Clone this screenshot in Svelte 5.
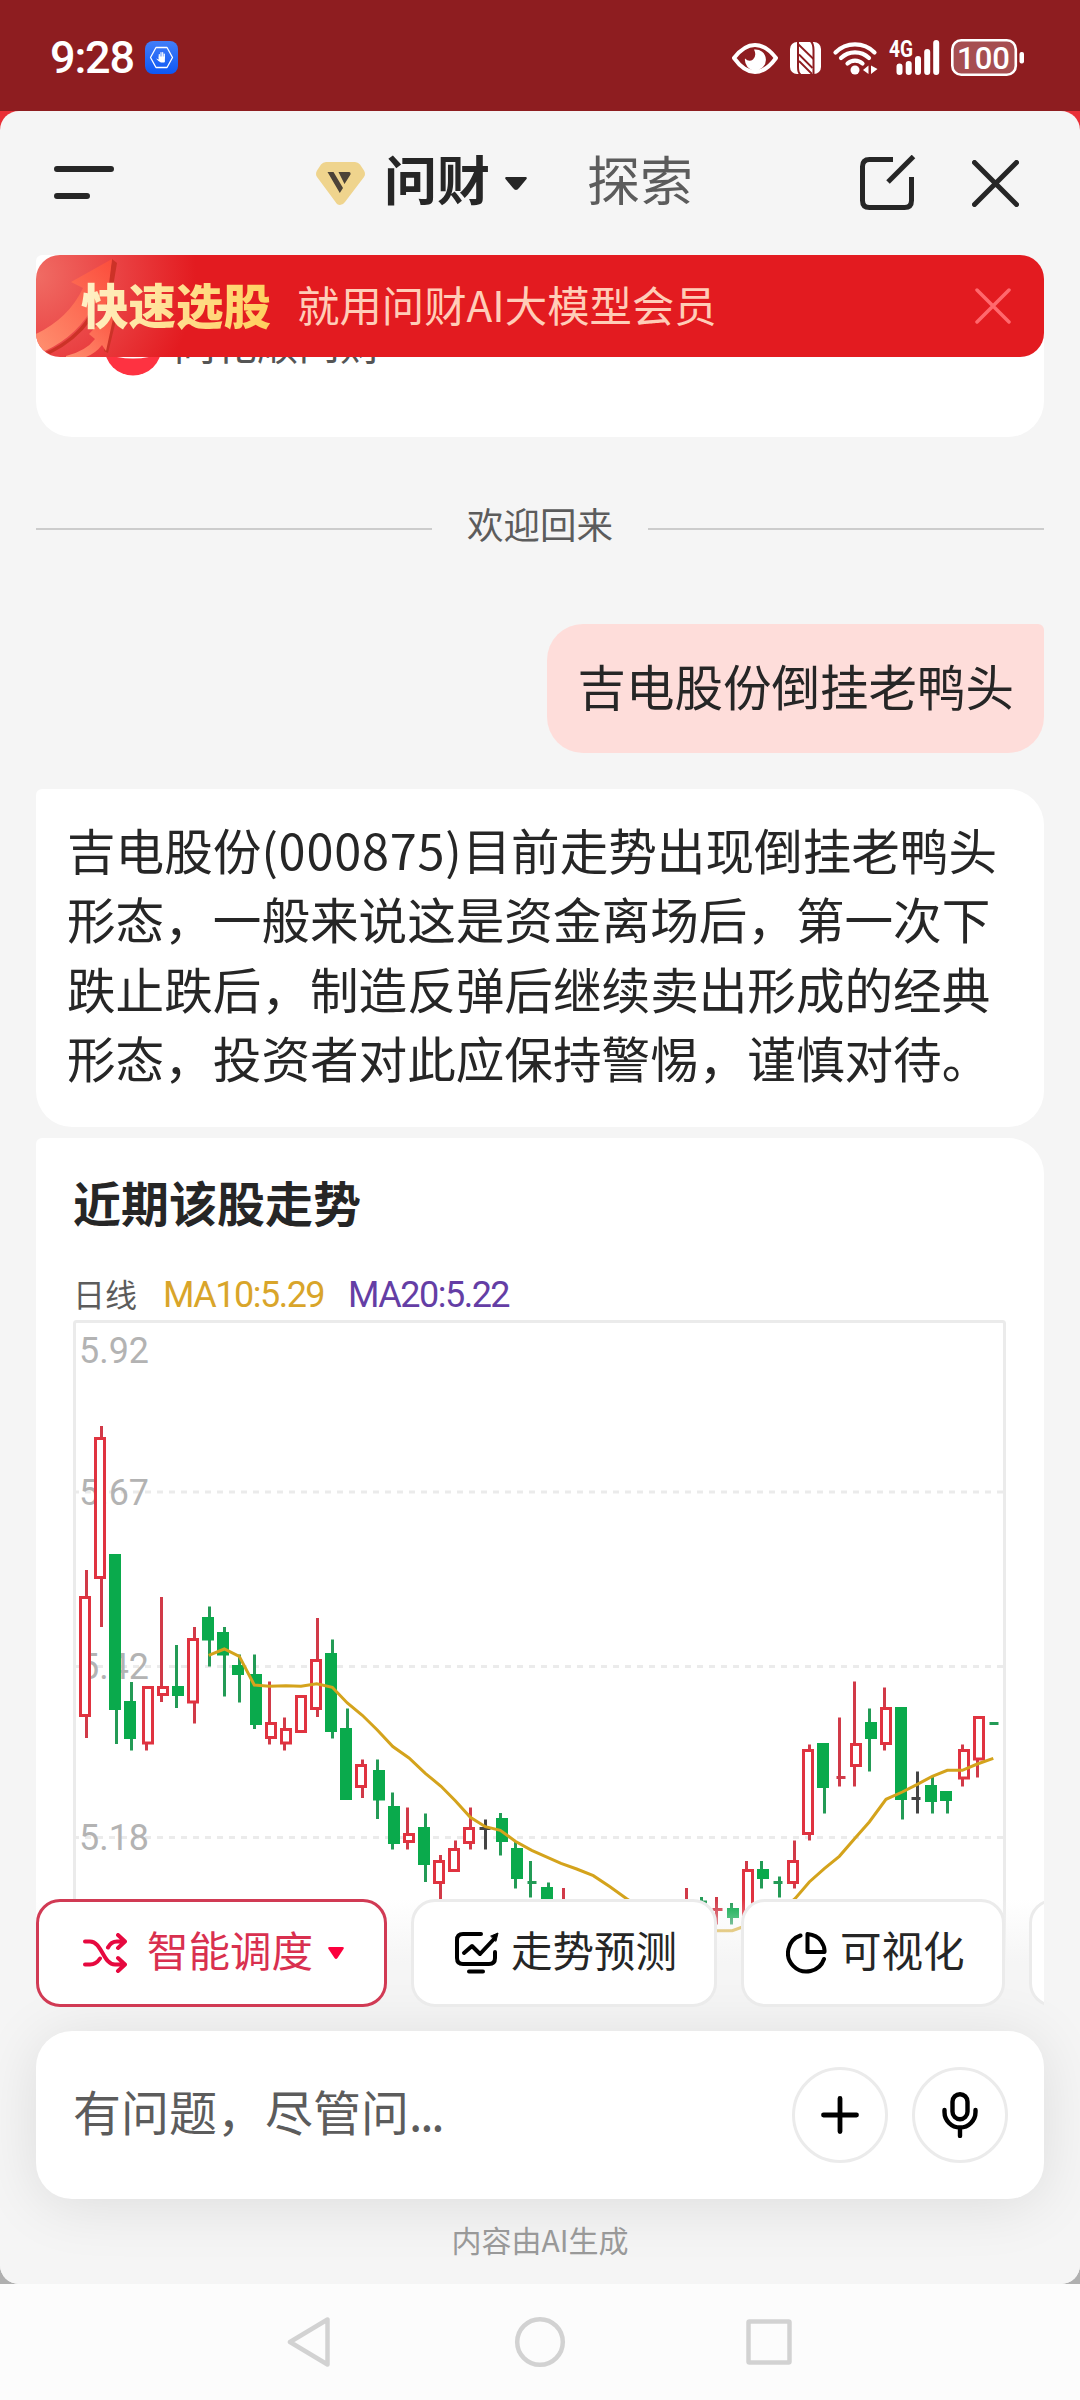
<script>
    const prices = [
        [1363, '5.92'],
        [1505, '5.67'],
        [1679, '5.42'],
        [1850, '5.18']
    ];
    const gridLines = [1492, 1666.5, 1837.5];

    // [body x, wick x, high, body top, body bottom, low, type]
    const candles = [
        [79, 86.5, 1570, 1596, 1717, 1738, 'up'],
        [94, 101.5, 1426, 1437, 1579, 1627, 'up'],
        [109, 116.5, 1554, 1554, 1710, 1744, 'down'],
        [124, 131.5, 1682, 1701, 1739, 1750.5, 'down'],
        [142, 146.5, 1686, 1686, 1744.5, 1750.5, 'up'],
        [157, 161.5, 1597, 1686, 1696, 1702, 'up'],
        [172, 176.5, 1645, 1686, 1696, 1708, 'down'],
        [187, 194.5, 1627, 1638, 1703.5, 1723.5, 'up'],
        [202, 209.5, 1606.5, 1617, 1640.5, 1666.5, 'down'],
        [217, 224.5, 1627, 1632, 1655.5, 1696.5, 'down'],
        [232, 239.5, 1654.5, 1665, 1675, 1702.5, 'down'],
        [250, 254.5, 1654.5, 1674, 1725, 1729, 'down'],
        [265, 269.5, 1681.5, 1722, 1739, 1744.5, 'up'],
        [280, 284.5, 1717.5, 1728, 1744.5, 1750.5, 'up'],
        [295, 302.5, 1695, 1695, 1733, 1733, 'up'],
        [310, 317.5, 1618, 1659, 1710, 1717, 'up'],
        [325, 332.5, 1639.5, 1653, 1732, 1738.5, 'down'],
        [340, 347.5, 1708.5, 1728, 1800, 1800, 'down'],
        [355, 362.5, 1759.5, 1764, 1788, 1798, 'up'],
        [373, 377.5, 1759.5, 1770, 1800.5, 1819, 'down'],
        [388, 392.5, 1792.5, 1806, 1844, 1849.5, 'down'],
        [403, 407.5, 1807.5, 1833, 1843, 1849.5, 'up'],
        [418, 425.5, 1813.5, 1827, 1865, 1882, 'down'],
        [433, 440.5, 1855, 1860, 1884, 1905, 'up'],
        [448, 455.5, 1840.5, 1848, 1872, 1872, 'up'],
        [463, 470.5, 1807.5, 1827, 1844, 1849.5, 'up'],
        [496, 500.5, 1813, 1818, 1842, 1855.5, 'down'],
        [511, 515.5, 1842, 1848, 1879, 1888.5, 'down'],
        [541, 548.5, 1882.5, 1887, 1910, 1915, 'down'],
        [559, 563.5, 1888, 1906, 1920, 1925, 'up'],
        [682, 686.5, 1888, 1906, 1920, 1925, 'up'],
        [727, 731.5, 1903, 1908, 1918, 1924.5, 'down'],
        [742, 746.5, 1861, 1869, 1936, 1936, 'up'],
        [757, 761.5, 1861, 1869, 1879, 1888.5, 'down'],
        [787, 794.5, 1840.5, 1860, 1884, 1888.5, 'up'],
        [802, 809.5, 1744.5, 1749, 1835, 1840.5, 'up'],
        [817, 824.5, 1743, 1743, 1788, 1813.5, 'down'],
        [850, 854.5, 1681.5, 1743, 1767, 1786.5, 'up'],
        [865, 869.5, 1708.5, 1722, 1739, 1771.5, 'down'],
        [880, 884.5, 1687.5, 1707, 1745, 1750.5, 'up'],
        [895, 902.5, 1707, 1707, 1800, 1819.5, 'down'],
        [925, 932.5, 1777, 1785, 1802, 1813.5, 'down'],
        [940, 947.5, 1791, 1791, 1801, 1813.5, 'down'],
        [958, 962.5, 1744.5, 1749, 1779.5, 1786.5, 'up'],
        [973, 977.5, 1716, 1716, 1760.5, 1777.5, 'up']
    ];

    // [wick x, high, low, tick y, tick x1, tick x2, type]
    const dojis = [
        [485.5, 1819.5, 1849.5, 1828.5, 479.5, 490.5, 'flat'],
        [530.5, 1861, 1897.5, 1882.5, 527.5, 536.5, 'down'],
        [701.5, 1897, 1902, 1902, 701, 707, 'down'],
        [716.5, 1897, 1924.5, 1909.5, 712.5, 722.5, 'up'],
        [779.5, 1876.5, 1897.5, 1882.5, 773.5, 782.5, 'down'],
        [839.5, 1717.5, 1786.5, 1777.5, 836.5, 845.5, 'up'],
        [917.5, 1771.5, 1813.5, 1798.5, 911.5, 920.5, 'flat'],
        [994, 1722, 1725, 1723.5, 989.5, 998.5, 'down']
    ];

    const ma10 = [
        [208.7, 1655.3], [224.3, 1649], [239.3, 1656.3], [254.3, 1685], [269.3, 1686.3], [286, 1685.7],
        [301, 1686.3], [316.7, 1683.7], [332.3, 1687.3], [347.3, 1703], [362.3, 1715.3], [377.3, 1730],
        [392.8, 1746.5], [409, 1758], [425.3, 1773.3], [441, 1786.3], [455.3, 1800.7], [470.3, 1817.3],
        [485.3, 1826.7], [500.3, 1830.3], [515.3, 1841.3], [531.7, 1850.3], [561, 1863.3], [576.7, 1869],
        [593.3, 1875.7], [610, 1886.7], [627, 1899], [655, 1916], [690, 1928], [716, 1930.7],
        [732.3, 1930.7], [748, 1925], [772, 1918], [795, 1898.7], [809.3, 1882], [824.3, 1868.7],
        [839.3, 1856.3], [854.3, 1839], [869.3, 1822], [886, 1799.3], [902.3, 1792], [917.3, 1784.3],
        [932.3, 1776.3], [947.3, 1770.3], [962.3, 1770.3], [977.3, 1764], [993.3, 1758.3]
    ];
    const maPoints = ma10.map(p => p.join(',')).join(' ');
</script>

<div class="phone">
    <div class="status">
        <span class="clock">9:28</span>
        <svg class="guard" width="33" height="33" viewBox="0 0 33 33">
            <defs>
                <linearGradient id="guardBg" x1="0" y1="0" x2="0" y2="1">
                    <stop offset="0" stop-color="#437ef8" />
                    <stop offset="1" stop-color="#0c57f5" />
                </linearGradient>
            </defs>
            <rect width="33" height="33" rx="8" fill="url(#guardBg)" />
            <path d="M11 6.5h11l5.5 10-5.5 10H11l-5.5-10z" fill="none" stroke="#fff" stroke-width="1.3" stroke-linejoin="round" />
            <path d="M14.3 17v-3.500M16 16v-4.500M17.700 16v-4.500M19.300 17v-4" stroke="#fff" stroke-width="1.200" stroke-linecap="round" />
            <path d="M11 17.500l2.700 1v-3h6.200v5q0 1-1 1h-3q-2.500-1-4.900-4z" fill="#fff" />
        </svg>
        <svg class="indicators" width="295" height="40" viewBox="731 37 295 40" fill="none" stroke="#fff">
            <path d="M734 57Q744 44 755 44T776 57Q766 71 755 71T734 57z" stroke-width="4" stroke-linejoin="round" />
            <path d="M754 48.500a10.500 10.500 0 1 1-9 9q4 4 8 1q4-4 1-10z" fill="#fff" stroke="none" />
            <rect x="790" y="41" width="31" height="32" rx="7" fill="#fff" stroke="none" />
            <path d="M798 41V66Q798 72 800.500 73.500M813.500 73V49Q813.500 43 811 40.500" stroke="#8e1d20" stroke-width="2" />
            <path d="M798 43L813.500 58M799 53.500L812.500 67M799 60L812 73" stroke="#8e1d20" stroke-width="1.800" />
            <path d="M835.500 51.500a27.500 27.500 0 0 1 39 0M841 57a20 20 0 0 1 28 0M847.500 62.500a11 11 0 0 1 15 0" stroke-width="4.200" stroke-linecap="round" />
            <circle cx="855" cy="69" r="4.500" fill="#fff" stroke="none" />
            <path d="M868.500 64.500V73l-5.500-4zM871 64.500V73l6.500-5z" fill="#fff" stroke="none" />
            <path d="M899.500 65.500V71M908.700 63V71M918 58V71M927.200 51V71M936.200 42V71" stroke-width="6" stroke-linecap="round" />
            <text x="889" y="56" class="net" textLength="24" lengthAdjust="spacingAndGlyphs">4G</text>
            <rect x="952.300" y="39.300" width="63.500" height="34.500" rx="9" fill="#fff" fill-opacity=".22" stroke-width="2.600" />
            <rect x="1019.500" y="51" width="4.500" height="11.500" rx="2" fill="#fff" stroke="none" />
            <text x="983.500" y="68" class="charge" text-anchor="middle">100</text>
        </svg>
    </div>

    <div class="stage">
        <div class="sheet">
            <header>
                <svg class="menu" width="60" height="34" viewBox="0 0 60 34">
                    <path d="M3 3H57M3 30H33" stroke="#262626" stroke-width="6" stroke-linecap="round" />
                </svg>
                <div class="tabs">
                    <svg width="49" height="43" viewBox="0 0 49 43">
                        <path d="M10 0h29q3 0 5 2.500l4 6q2 3.500 0 6.500L29 40q-2 3-5 3t-4.500-3L1 15q-2-3 0-6.500l4-6Q7 0 10 0z" fill="#efd48d" />
                        <path d="M11.500 10h6L27 26l-3.200 5zM22.500 10h10.500q2 0 1.500 2.500L28.500 22z" fill="#4c4338" />
                    </svg>
                    <span class="tab active">问财</span>
                    <svg class="caret" width="22" height="13" viewBox="0 0 22 13">
                        <path d="M1.500 0h19q2 0 1 2l-7.500 9q-3 4-6 0l-7.500-9q-1-2 1-2z" fill="#262626" />
                    </svg>
                    <span class="tab">探索</span>
                </div>
                <svg class="edit" width="56" height="56" viewBox="0 0 56 56" fill="none" stroke="#262626" stroke-width="5">
                    <path d="M33 4.500H9.500q-7 0-7 7v34q0 7 7 7h35q7 0 7-7V22" />
                    <path d="M28 27L53.500 1.500" />
                </svg>
                <svg width="47" height="47" viewBox="0 0 47 47">
                    <path d="M2.500 2.500l42 42M44.500 2.500l-42 42" stroke="#262626" stroke-width="5" stroke-linecap="round" />
                </svg>
            </header>

            <main>
                <section class="card source">
                    <svg width="56" height="58" viewBox="0 0 56 58">
                        <circle cx="28" cy="29" r="28.500" fill="#fe3241" />
                        <path d="M12 39q16 3 32 0v-9H12z" fill="#fff" />
                    </svg>
                    <span>同花顺问财</span>
                </section>

                <div class="divider"><span>欢迎回来</span></div>

                <div class="question">吉电股份倒挂老鸭头</div>

                <section class="card answer">
                    吉电股份<span class="code">(000875)</span>目前走势出现倒挂老鸭头<br />形态，一般来说这是资金离场后，第一次下<br />跌止跌后，制造反弹后继续卖出形成的经典<br />形态，投资者对此应保持警惕，谨慎对待。
                </section>

                <section class="card trend">
                    <h2>近期该股走势</h2>
                    <div class="legend">
                        <span class="period">日线</span>
                        <span class="ma ma10">MA10:5.29</span>
                        <span class="ma ma20">MA20:5.22</span>
                    </div>
                    <svg class="chart" width="933" height="700" viewBox="73 1320 933 700">
                        <rect x="74.500" y="1321.500" width="930" height="760" rx="2" fill="none" stroke="#ebebeb" stroke-width="3" />
                        {#each gridLines as y}
                            <line x1="73" x2="1003" y1={y} y2={y} stroke="#ebebeb" stroke-width="3" stroke-dasharray="6 6" />
                        {/each}
                        {#each prices as [y, label]}
                            <text x="79" {y} class="price" textLength="70" lengthAdjust="spacingAndGlyphs">{label}</text>
                        {/each}
                        {#each candles as [x, wx, hi, top, bottom, lo, type]}
                            <g class={type}>
                                <line x1={wx} x2={wx} y1={hi} y2={lo} />
                                {#if type === 'up'}
                                    <rect x={x + 1.5} y={top + 1.5} width="9" height={bottom - top - 3} />
                                {:else}
                                    <rect {x} y={top} width="12" height={bottom - top} />
                                {/if}
                            </g>
                        {/each}
                        {#each dojis as [wx, hi, lo, y, x1, x2, type]}
                            <g class={type}>
                                <line x1={wx} x2={wx} y1={hi} y2={lo} />
                                <line {x1} {x2} y1={y} y2={y} />
                            </g>
                        {/each}
                        <polyline points={maPoints} fill="none" stroke="#d4a31c" stroke-width="3" />
                    </svg>
                </section>
            </main>

            <div class="banner">
                <svg class="arrows" width="150" height="102" viewBox="0 0 150 102">
                    <defs>
                        <linearGradient id="arrowFill" x1="1" y1="0" x2="0" y2="1">
                            <stop offset="0" stop-color="#fb4d3c" />
                            <stop offset="1" stop-color="#ff9070" />
                        </linearGradient>
                    </defs>
                    <path d="M76 4l5 4-7 42-5 0zM10 97Q38 84 52 62l3 3Q40 86 14 99z" fill="#cc3227" />
                    <path d="M76 4L35 27l12 6Q33 63 0 79v10q4 5 9 7Q43 80 59 48l11 6z" fill="url(#arrowFill)" />
                    <path d="M80 50l3 3-11 45-4-2z" fill="#cc3227" />
                    <path d="M80 50L53 79l6 5q-9 12-29 17v1h20q10-4 16-12l4 6z" fill="url(#arrowFill)" />
                </svg>
                <strong>快速选股</strong>
                <span>就用问财AI大模型会员</span>
                <svg width="36" height="36" viewBox="0 0 36 36">
                    <path d="M2 2l32 32M34 2L2 34" stroke="#ff686d" stroke-width="3.500" stroke-linecap="round" />
                </svg>
            </div>

            <footer>
                <div class="chips">
                    <button class="chip selected">
                        <svg width="44" height="40" viewBox="0 0 44 40" fill="none" stroke="#e6093f" stroke-width="4" stroke-linecap="round" stroke-linejoin="round">
                            <path d="M2 8.500H7C19 8.500 20 31.500 32 31.500H41M2 31.500H7Q13 31.500 17 25.500M25 14.500Q28 8.500 34 8.500H41M35 2l7 6.500-7 6.500M35 25l7 6.500-7 6.500" />
                        </svg>
                        <span>智能调度</span>
                        <svg class="drop" width="16" height="13" viewBox="0 0 16 13">
                            <path d="M1.500 0h13q2 0 1 2l-6 9q-1.500 2-3 0l-6-9q-1-2 1-2z" fill="#fc003d" />
                        </svg>
                    </button>
                    <button class="chip predict">
                        <svg width="44" height="42" viewBox="0 0 44 42" fill="none" stroke="#000" stroke-width="4" stroke-linecap="round" stroke-linejoin="round">
                            <path d="M26 2H8Q2 2 2 8V26q0 6 6 6H34q6 0 6-6V20M14 39.500H28" />
                            <path d="M9 21l8-7 8 8L39 7" />
                            <path d="M36 4l7-3-2 8z" fill="#000" stroke-width="1" />
                        </svg>
                        <span>走势预测</span>
                    </button>
                    <button class="chip visual">
                        <svg width="41" height="42" viewBox="0 0 41 42" fill="none" stroke="#000" stroke-width="4" stroke-linecap="round" stroke-linejoin="round">
                            <path d="M14.500 3.500A18.500 18.500 0 1 0 38 27" />
                            <path d="M21.500 2V20H38.500Q39 15 35 9T21.500 2z" />
                        </svg>
                        <span>可视化</span>
                    </button>
                    <button class="chip more" aria-label="more"></button>
                </div>
                <div class="composer">
                    <span class="hint">有问题，尽管问<i>...</i></span>
                    <button class="round" aria-label="add">
                        <svg width="38" height="38" viewBox="0 0 38 38">
                            <path d="M19 2.500V35.500M2.500 19H35.500" stroke="#000" stroke-width="4.800" stroke-linecap="round" />
                        </svg>
                    </button>
                    <button class="round" aria-label="voice">
                        <svg width="36" height="46" viewBox="0 0 36 46" fill="none" stroke="#000" stroke-width="4.400" stroke-linecap="round">
                            <rect x="10.500" y="2.200" width="15" height="25" rx="7.500" />
                            <path d="M2.500 18v2a15.500 15.500 0 0 0 31 0v-2M18 36v8" />
                        </svg>
                    </button>
                </div>
                <p>内容由AI生成</p>
            </footer>
        </div>
    </div>

    <nav>
        <svg width="506" height="52" viewBox="287 2316 506 52" fill="none" stroke="#d2d2d2" stroke-width="4.500" stroke-linejoin="round">
            <path d="M327.500 2319.500V2364.500L290 2342z" />
            <circle cx="540" cy="2342" r="22.800" />
            <rect x="748.500" y="2321.500" width="41" height="41" rx="1" />
        </svg>
    </nav>
</div>

<style>
    :global(body) {
        margin: 0;
    }

    .phone {
        width: 1080px;
        height: 2400px;
        display: flex;
        flex-direction: column;
        overflow: hidden;
        font-family: "Noto Sans CJK SC", sans-serif;
        color: #262626;
    }

    svg {
        display: block;
        flex: none;
    }

    button {
        font: inherit;
        color: inherit;
        padding: 0;
        box-sizing: border-box;
        background: #fff;
    }

    /* system status bar */
    .status {
        height: 111px;
        box-sizing: border-box;
        padding: 4px 54px 0 50px;
        display: flex;
        align-items: center;
        background: #8e1d20;
        color: #fff;
    }

    .clock {
        font: 500 45px/60px Roboto, sans-serif;
        width: 95px;
        letter-spacing: -1.2px;
    }

    .indicators {
        margin-left: auto;
    }

    .net {
        font: 700 23px Roboto, sans-serif;
        fill: #fff;
        stroke: none;
    }

    .charge {
        font: 500 31px Roboto, sans-serif;
        fill: #fff;
        stroke: none;
    }

    .stage {
        flex: 1;
        background: linear-gradient(#e92f36 50%, #b0b0b0 50%);
    }

    .sheet {
        position: relative;
        height: 2173px;
        display: flex;
        flex-direction: column;
        overflow: hidden;
        border-radius: 19px;
        background: #f5f5f5;
    }

    header {
        height: 144px;
        box-sizing: border-box;
        padding: 0 61px 0 54px;
        display: flex;
        align-items: center;
    }

    .tabs {
        display: flex;
        align-items: center;
        margin-left: 202px;
        font-size: 53px;
        line-height: 80px;
    }

    .tab {
        color: #5c5c5c;
        padding-bottom: 10px;
    }

    .tab.active {
        color: #262626;
        font-weight: 700;
        margin: 0 15px 0 19px;
    }

    .caret {
        margin-right: 60px;
    }

    .edit {
        margin: 0 56px 0 auto;
    }

    main {
        flex: 1;
        min-height: 0;
        overflow: hidden;
        padding: 0 36px;
        display: flex;
        flex-direction: column;
    }

    .card {
        flex: none;
        box-sizing: border-box;
        background: #fff;
        border-radius: 6px 36px 36px 36px;
    }

    .source {
        height: 182px;
        padding: 63px 69px 0;
        display: flex;
        gap: 13px;
        font-size: 41.5px;
        line-height: 49px;
        color: #555;
    }

    .divider {
        flex: none;
        display: flex;
        align-items: center;
        gap: 35px;
        margin: 72px 0 75px;
        font-size: 36.5px;
        line-height: 40px;
        color: #5c5c5c;
    }

    .divider span {
        margin: -5px 0 5px;
    }

    .divider::before,
    .divider::after {
        content: '';
        flex: 1;
        height: 2px;
        background: #ccc;
    }

    .question {
        flex: none;
        align-self: flex-end;
        height: 129px;
        padding: 0 30px;
        border-radius: 36px 6px 36px 36px;
        background: #feddda;
        font-size: 48.5px;
        line-height: 122px;
    }

    .answer {
        height: 338px;
        margin: 36px 0 11px;
        padding: 26px 31px 0;
        font-size: 48.6px;
        line-height: 69.3px;
        white-space: nowrap;
    }

    .code {
        letter-spacing: 0.8px;
    }

    .trend {
        height: 900px;
        padding: 33px 37px 0;
    }

    h2 {
        margin: 0;
        font-size: 48px;
        line-height: 60px;
        font-weight: 700;
    }

    .legend {
        display: flex;
        align-items: center;
        height: 50px;
        margin-top: 39px;
        font-size: 32px;
        line-height: 50px;
    }

    .period {
        color: #5c5c5c;
        width: 90px;
        margin-top: -4px;
    }

    .ma {
        font: 400 36px/50px Roboto, sans-serif;
        letter-spacing: -1.5px;
        width: 185px;
    }

    .ma10 {
        color: #d9a52a;
    }

    .ma20 {
        color: #643ea5;
    }

    .price {
        font: 400 36px Roboto, sans-serif;
        fill: #b3b3b3;
    }

    .chart line {
        stroke-width: 3;
    }

    .up line {
        stroke: #d13a48;
    }

    .up rect {
        fill: #fff;
        stroke: #e03340;
        stroke-width: 3;
    }

    .down line {
        stroke: #239b56;
    }

    .down rect {
        fill: #0aaa4c;
    }

    .flat line {
        stroke: #444;
    }

    /* promo strip floating over the conversation */
    .banner {
        position: absolute;
        top: 144px;
        left: 36px;
        right: 36px;
        height: 102px;
        box-sizing: border-box;
        padding: 0 33px 0 45px;
        display: flex;
        align-items: center;
        overflow: hidden;
        border-radius: 24px;
        background: radial-gradient(circle at 0 20%, #f06c64 0, #ea4344 80px, #e31b20 160px);
    }

    .banner strong {
        position: relative;
        font-size: 47.5px;
        line-height: 60px;
        font-weight: 900;
        margin-top: -4px;
        background: linear-gradient(100deg, #fff0c4 5%, #ffdf90 50%, #ffcf5c);
        -webkit-background-clip: text;
        background-clip: text;
        color: transparent;
    }

    .banner span {
        flex: 1;
        margin: -4px 0 0 26px;
        font-size: 42.4px;
        line-height: 60px;
        color: #ffcdb8;
    }

    .arrows {
        position: absolute;
        left: 0;
        top: 0;
    }

    footer {
        position: absolute;
        left: 0;
        right: 0;
        bottom: 0;
        height: 385px;
        padding: 0 36px;
        display: flex;
        flex-direction: column;
        background: linear-gradient(rgba(245, 245, 245, 0), #f5f5f5 64px);
    }

    .chips {
        display: flex;
        flex: none;
        gap: 24px;
        height: 108px;
        margin-bottom: 24px;
        overflow: hidden;
        position: relative;
        z-index: 1;
    }

    .chip {
        flex: none;
        display: flex;
        align-items: center;
        border: 3px solid #ebebeb;
        border-radius: 24px;
        font-size: 41.5px;
        line-height: 60px;
    }

    .chip span {
        margin-top: -9px;
    }

    .selected {
        width: 351px;
        padding-left: 44px;
        gap: 20px;
        border-color: #d13a54;
        color: #d9304f;
    }

    .drop {
        margin-left: -5px;
    }

    .predict {
        width: 306px;
        padding-left: 41px;
        gap: 12px;
    }

    .visual {
        width: 264px;
        padding-left: 42px;
        gap: 13px;
    }

    .more {
        width: 200px;
    }

    .composer {
        flex: none;
        height: 168px;
        box-sizing: border-box;
        padding: 0 36px 0 37px;
        display: flex;
        align-items: center;
        gap: 24px;
        border-radius: 36px;
        background: #fff;
        box-shadow: 0 6px 60px rgba(0, 0, 0, 0.1);
    }

    .hint {
        flex: 1;
        margin-top: -10px;
        font-size: 48px;
        line-height: 70px;
        color: #5c5c5c;
    }

    .hint i {
        font-style: normal;
        letter-spacing: -2.2px;
    }

    .round {
        width: 96px;
        height: 96px;
        border: 3px solid #ebebeb;
        border-radius: 50%;
        display: flex;
        align-items: center;
        justify-content: center;
    }

    p {
        margin: 20px 0 0;
        text-align: center;
        font-size: 30px;
        line-height: 40px;
        color: #999;
    }

    nav {
        height: 116px;
        display: flex;
        align-items: center;
        justify-content: center;
        background: #fcfcfc;
    }
</style>
